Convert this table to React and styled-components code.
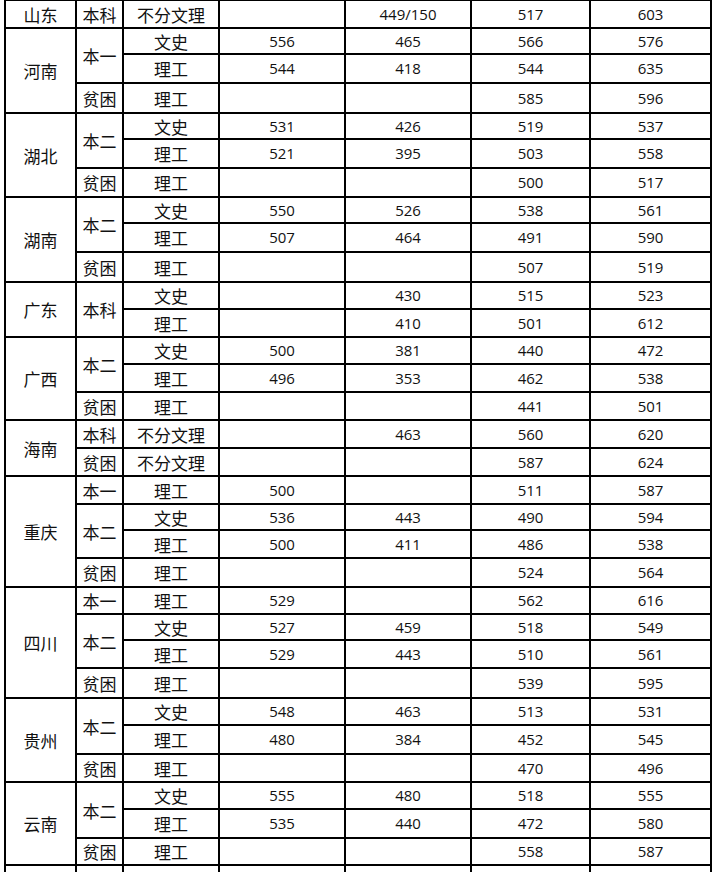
import styled, { createGlobalStyle } from "styled-components";

const GlobalStyle = createGlobalStyle`
  html, body {
    margin: 0;
    padding: 0;
    background: #fff;
    overflow: hidden;
  }
`;

// [科类, 省控线, 一本线, 最低分, 最高分, 行高]
const provinces = [
  { name: "山东", groups: [{ batch: "本科", rows: [["不分文理", "", "449/150", "517", "603", 28]] }] },
  {
    name: "河南",
    groups: [
      { batch: "本一", rows: [["文史", "556", "465", "566", "576", 26], ["理工", "544", "418", "544", "635", 29]] },
      { batch: "贫困", rows: [["理工", "", "", "585", "596", 30]] },
    ],
  },
  {
    name: "湖北",
    groups: [
      { batch: "本二", rows: [["文史", "531", "426", "519", "537", 26], ["理工", "521", "395", "503", "558", 29]] },
      { batch: "贫困", rows: [["理工", "", "", "500", "517", 29]] },
    ],
  },
  {
    name: "湖南",
    groups: [
      { batch: "本二", rows: [["文史", "550", "526", "538", "561", 26], ["理工", "507", "464", "491", "590", 29]] },
      { batch: "贫困", rows: [["理工", "", "", "507", "519", 30]] },
    ],
  },
  {
    name: "广东",
    groups: [{ batch: "本科", rows: [["文史", "", "430", "515", "523", 27], ["理工", "", "410", "501", "612", 28]] }],
  },
  {
    name: "广西",
    groups: [
      { batch: "本二", rows: [["文史", "500", "381", "440", "472", 27], ["理工", "496", "353", "462", "538", 28]] },
      { batch: "贫困", rows: [["理工", "", "", "441", "501", 28]] },
    ],
  },
  {
    name: "海南",
    groups: [
      { batch: "本科", rows: [["不分文理", "", "463", "560", "620", 28]] },
      { batch: "贫困", rows: [["不分文理", "", "", "587", "624", 28]] },
    ],
  },
  {
    name: "重庆",
    groups: [
      { batch: "本一", rows: [["理工", "500", "", "511", "587", 28]] },
      { batch: "本二", rows: [["文史", "536", "443", "490", "594", 26], ["理工", "500", "411", "486", "538", 28]] },
      { batch: "贫困", rows: [["理工", "", "", "524", "564", 29]] },
    ],
  },
  {
    name: "四川",
    groups: [
      { batch: "本一", rows: [["理工", "529", "", "562", "616", 27]] },
      { batch: "本二", rows: [["文史", "527", "459", "518", "549", 26], ["理工", "529", "443", "510", "561", 28]] },
      { batch: "贫困", rows: [["理工", "", "", "539", "595", 30]] },
    ],
  },
  {
    name: "贵州",
    groups: [
      { batch: "本二", rows: [["文史", "548", "463", "513", "531", 27], ["理工", "480", "384", "452", "545", 29]] },
      { batch: "贫困", rows: [["理工", "", "", "470", "496", 28]] },
    ],
  },
  {
    name: "云南",
    groups: [
      { batch: "本二", rows: [["文史", "555", "480", "518", "555", 27], ["理工", "535", "440", "472", "580", 29]] },
      { batch: "贫困", rows: [["理工", "", "", "558", "587", 27]] },
    ],
  },
  { name: "", groups: [{ batch: "", rows: [["", "", "", "", "", 28]] }] },
];

const colWidths = [71, 47, 96, 126, 126, 119, 121];

const Page = styled.div`
  padding: 0 0 0 4px;
  margin-top: -1px;
`;

const Table = styled.table`
  border-collapse: collapse;
  table-layout: fixed;
  color: #111;
`;

const Row = styled.tr`
  height: ${({ $h }) => $h}px;
`;

const Cell = styled.td`
  border: 2px solid #000;
  padding: 0;
  text-align: center;
  vertical-align: middle;
  line-height: 1;
  white-space: nowrap;
  font-family: ${({ $num }) =>
    $num
      ? '"Open Sans", "Noto Sans", "Noto Sans CJK SC", sans-serif'
      : '"Noto Sans CJK SC", "Noto Sans", sans-serif'};
  font-size: ${({ $num }) => ($num ? "15px" : "17px")};
`;

function App() {
  const rows = [];
  provinces.forEach((p) => {
    const total = p.groups.reduce((n, g) => n + g.rows.length, 0);
    p.groups.forEach((g, gi) => {
      g.rows.forEach((r, ri) => {
        const [subject, a, b, c, d, h] = r;
        rows.push(
          <Row key={`${p.name}-${gi}-${ri}-${rows.length}`} $h={h}>
            {gi === 0 && ri === 0 && <Cell rowSpan={total}>{p.name}</Cell>}
            {ri === 0 && <Cell rowSpan={g.rows.length}>{g.batch}</Cell>}
            <Cell>{subject}</Cell>
            <Cell $num>{a}</Cell>
            <Cell $num>{b}</Cell>
            <Cell $num>{c}</Cell>
            <Cell $num>{d}</Cell>
          </Row>
        );
      });
    });
  });

  return (
    <Page>
      <GlobalStyle />
      <Table>
        <colgroup>
          {colWidths.map((w, i) => (
            <col key={i} style={{ width: w }} />
          ))}
        </colgroup>
        <tbody>{rows}</tbody>
      </Table>
    </Page>
  );
}

export default App;
